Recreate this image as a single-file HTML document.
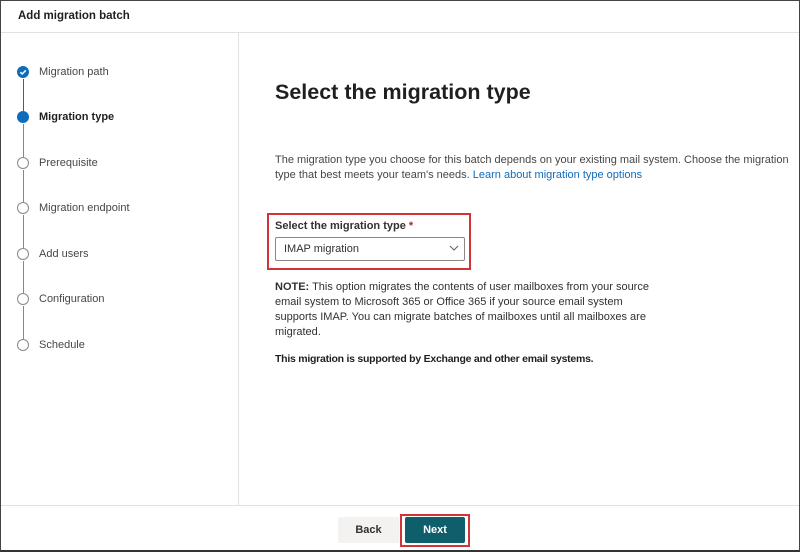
<!DOCTYPE html>
<html><head><meta charset="utf-8"><style>
*{margin:0;padding:0;box-sizing:border-box}
body{width:800px;height:552px;background:#fff;font-family:"Liberation Sans",sans-serif;color:#323130;position:relative;overflow:hidden}
.frame{position:absolute;left:0;top:0;width:800px;height:552px;border:1px solid #444;border-bottom:2px solid #333}
.abs{position:absolute}
.hdr{left:18px;top:10px;font-size:11.5px;font-weight:bold;color:#201f1e}
.step{position:absolute;left:39px;font-size:11px;color:#484644}
.circ{position:absolute;left:17px;width:12px;height:12px;border-radius:50%;border:1.5px solid #8a8886;background:#fff}
.line{position:absolute;left:22.5px;width:1px;background:#8a8886}
p{font-size:11px;line-height:15px}
</style></head><body>
<div class="frame"></div>
<div class="abs hdr">Add migration batch</div>
<div class="abs" style="left:1px;top:32px;width:798px;height:1px;background:#dfe3e6"></div>
<div class="abs" style="left:238px;top:33px;width:1px;height:473px;background:#dfe3e6"></div>
<div class="abs" style="left:1px;top:505px;width:798px;height:1px;background:#dfe3e6"></div>

<div class="line" style="top:79px;height:32px;background:#0f6cbd"></div>
<div class="line" style="top:124px;height:33px"></div>
<div class="line" style="top:170px;height:32px"></div>
<div class="line" style="top:215px;height:33px"></div>
<div class="line" style="top:261px;height:32px"></div>
<div class="line" style="top:306px;height:33px"></div>

<div class="circ" style="top:66px;background:#0f6cbd;border-color:#0f6cbd"></div>
<svg class="abs" style="left:17px;top:66px" width="12" height="12"><path d="M3.3 6.2 L5.2 8 L8.8 4.3" stroke="#fff" stroke-width="1.5" fill="none"/></svg>
<div class="circ" style="top:111px;background:#0f6cbd;border-color:#0f6cbd"></div>
<div class="circ" style="top:157px"></div>
<div class="circ" style="top:202px"></div>
<div class="circ" style="top:248px"></div>
<div class="circ" style="top:293px"></div>
<div class="circ" style="top:339px"></div>

<div class="step" style="top:66px">Migration path</div>
<div class="step" style="top:111px;font-weight:bold;color:#201f1e">Migration type</div>
<div class="step" style="top:157px">Prerequisite</div>
<div class="step" style="top:202px">Migration endpoint</div>
<div class="step" style="top:248px">Add users</div>
<div class="step" style="top:293px">Configuration</div>
<div class="step" style="top:339px">Schedule</div>

<div class="abs" style="left:275px;top:80px;font-size:21.5px;font-weight:bold;color:#201f1e">Select the migration type</div>
<p class="abs" style="left:275px;top:153px;width:525px;color:#484644">The migration type you choose for this batch depends on your existing mail system. Choose the migration type that best meets your team's needs. <span style="color:#0f6cbd">Learn about migration type options</span></p>

<div class="abs" style="left:267px;top:213px;width:204px;height:57px;border:2px solid #d13438"></div>
<div class="abs" style="left:275px;top:220px;font-size:11px;font-weight:bold;color:#323130">Select the migration type <span style="color:#a4262c">*</span></div>
<div class="abs" style="left:275px;top:237px;width:190px;height:24px;border:1px solid #8a8886;border-radius:2px;font-size:11px;padding:5px 8px;color:#323130">IMAP migration</div>
<svg class="abs" style="left:449px;top:244px" width="10" height="8"><path d="M1 2 L5 6 L9 2" stroke="#605e5c" stroke-width="1" fill="none"/></svg>

<p class="abs" style="left:275px;top:280px;width:380px;color:#323130"><b>NOTE:</b> This option migrates the contents of user mailboxes from your source email system to Microsoft 365 or Office 365 if your source email system supports IMAP. You can migrate batches of mailboxes until all mailboxes are migrated.</p>
<p class="abs" style="left:275px;top:352px;font-weight:bold;color:#201f1e;font-size:10.5px;letter-spacing:-0.25px">This migration is supported by Exchange and other email systems.</p>

<div class="abs" style="left:338px;top:517px;width:61px;height:26px;background:#f3f2f1;border-radius:2px;font-size:11px;font-weight:bold;text-align:center;line-height:26px;color:#323130">Back</div>
<div class="abs" style="left:400px;top:514px;width:70px;height:33px;border:2px solid #d13438"></div>
<div class="abs" style="left:405px;top:517px;width:60px;height:26px;background:#0f5e6b;border-radius:2px;font-size:11px;font-weight:bold;text-align:center;line-height:26px;color:#fff">Next</div>
</body></html>
